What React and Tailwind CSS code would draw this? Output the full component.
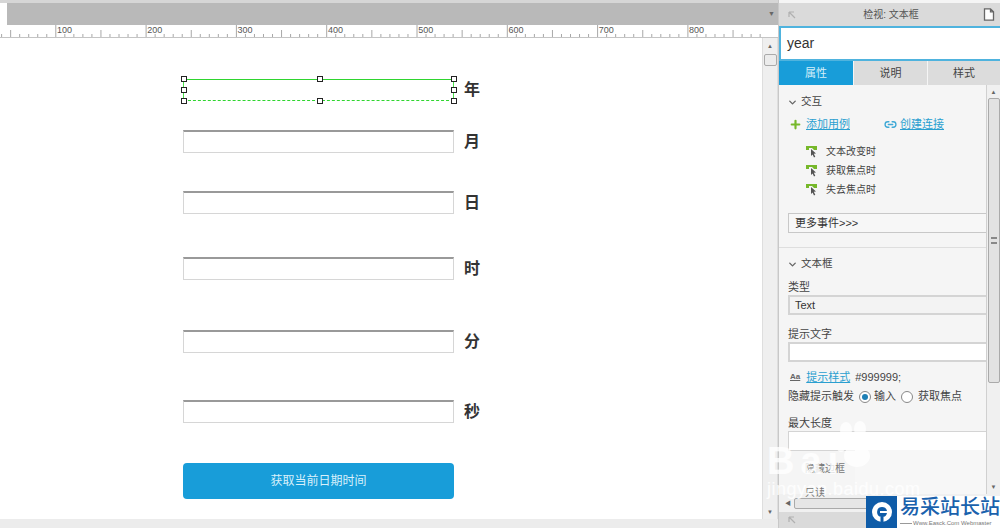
import React from 'react';
import { ChevronDown, Plus, Link2 } from 'lucide-react';

const fields = [
  { label: '月', mt: 'mt-[29px]' },
  { label: '日', mt: 'mt-[38px]' },
  { label: '时', mt: 'mt-[43px]' },
  { label: '分', mt: 'mt-[50px]' },
  { label: '秒', mt: 'mt-[47px]' },
];

const events = ['文本改变时', '获取焦点时', '失去焦点时'];

const Ruler = () => {
  const ticks = [];
  for (let i = 0; i < 100; i++) {
    const x = -34.5 + i * 9.03;
    const h = i % 10 === 0 ? 13 : i % 5 === 0 ? 7 : 3;
    ticks.push(<line key={i} x1={x} x2={x} y1={12 - h} y2={12} stroke="#a8a8a8" strokeWidth="1" />);
  }
  return (
    <div className="relative h-[13px] bg-white border-b border-[#c4c4c4] overflow-hidden">
      <svg width="762" height="12" className="block">{ticks}</svg>
      {[100, 200, 300, 400, 500, 600, 700, 800].map((n, i) => (
        <span key={n} className="absolute top-[-1px] text-[9px] leading-[13px] text-[#555]" style={{ left: 57 + i * 90.3 }}>{n}</span>
      ))}
    </div>
  );
};

const Handle = ({ className }) => (
  <span className={`absolute w-[6px] h-[6px] bg-white border border-[#222] ${className}`}></span>
);

const Inspector = () => (
  <div className="w-[222px] shrink-0 flex flex-col bg-[#f5f5f5] border-l border-[#c8c8c8] text-[11px] text-[#444] h-full">
    <div className="h-[23px] mt-[3px] bg-[#dadada] flex items-center justify-between pl-[9px] pr-[4px] shrink-0">
      <svg width="8" height="8" viewBox="0 0 8 8"><path d="M1 1h5M1 1v5M1 1l6 6" stroke="#b0b0b0" strokeWidth="1.2" fill="none" /></svg>
      <span className="text-[10px] text-[#555] ml-[3px]">检视: 文本框</span>
      <svg width="12" height="13" viewBox="0 0 12 13" className="mr-[1px]"><path d="M1.5.8h6l3 3v8.4h-9z M7.500 .8v3h3" fill="#fdfdfd" stroke="#666" strokeWidth="1.300" /></svg>
    </div>
    <div className="h-[35px] bg-white border-2 border-r-0 border-[#4fb3de] flex items-center pl-[6px] text-[14px] text-[#333] shrink-0">year</div>
    <div className="h-[24px] flex shrink-0">
      <div className="w-[74px] bg-[#189dd9] text-[#d4effa] flex items-center justify-center">属性</div>
      <div className="w-[73px] ml-[1px] bg-[#dcdcdc] flex items-center justify-center text-[#444]">说明</div>
      <div className="flex-1 ml-[1px] bg-[#dcdcdc] flex items-center justify-center text-[#444]">样式</div>
    </div>
    <div className="flex-1 flex min-h-0">
      <div className="flex-1 min-w-0 overflow-hidden">
        <div className="flex items-center pl-[8px] mt-[9px] h-[16px]">
          <ChevronDown size={11} strokeWidth={3} className="text-[#666]" />
          <span className="ml-[3px] text-[10.5px]">交互</span>
        </div>
        <div className="flex items-center mt-[6px] pl-[10px] h-[17px]">
          <Plus size={13} strokeWidth={4} className="text-[#76b82a]" />
          <span className="ml-[4px] text-[#2a9fd0] underline">添加用例</span>
          <Link2 size={13} strokeWidth={2.500} className="ml-[34px] text-[#3fa9d6]" />
          <span className="ml-[3px] text-[#2a9fd0] underline">创建连接</span>
        </div>
        <div className="mt-[11px] pl-[27px] flex flex-col gap-[4px] text-[10px]">
          {events.map((e) => (
            <div key={e} className="flex items-center h-[15px]">
              <svg width="12" height="12" viewBox="0 0 12 12">
                <path d="M0 0h11v4H8L6 2H3v2H0z" fill="#76b82a" />
                <path d="M5 3l5 4.500-2.200.3 1.500 3-1.300.6-1.400-3-1.600 1.500z" fill="#555" />
              </svg>
              <span className="ml-[8px]">{e}</span>
            </div>
          ))}
        </div>
        <div className="mt-[16px] ml-[9px] h-[20px] border border-r-0 border-[#c8c8c8] pl-[6px] flex items-center text-[#333] bg-[#f7f7f7]">更多事件&gt;&gt;&gt;</div>
        <div className="mt-[14px] border-t border-[#dedede]"></div>
        <div className="flex items-center pl-[8px] mt-[8px] h-[16px]">
          <ChevronDown size={11} strokeWidth={3} className="text-[#666]" />
          <span className="ml-[3px] text-[10.5px]">文本框</span>
        </div>
        <div className="ml-[9px] mt-[8px] leading-[15px]">类型</div>
        <div className="ml-[9px] h-[20px] border-2 border-r-0 border-[#d4d4d4] pl-[5px] flex items-center text-[#333] bg-[#f3f3f3]">Text</div>
        <div className="ml-[9px] mt-[12px] leading-[15px]">提示文字</div>
        <div className="ml-[9px] h-[20px] border-2 border-r-0 border-[#d4d4d4] bg-white"></div>
        <div className="flex items-center ml-[11px] mt-[6px] h-[18px]">
          <span className="text-[8px] font-bold underline text-[#666] font-['Liberation_Sans',sans-serif]">Aa</span>
          <span className="ml-[6px] text-[#2a9fd0] underline">提示样式</span>
          <span className="ml-[5px] text-[#444]">#999999;</span>
        </div>
        <div className="flex items-center ml-[9px] mt-[2px] h-[17px]">
          <span>隐藏提示触发</span>
          <span className="ml-[5px] w-[12px] h-[12px] rounded-full border border-[#888] flex items-center justify-center bg-white">
            <span className="w-[6px] h-[6px] rounded-full bg-[#1d7fb5]"></span>
          </span>
          <span className="ml-[3px]">输入</span>
          <span className="ml-[5px] w-[12px] h-[12px] rounded-full border border-[#888] bg-white"></span>
          <span className="ml-[5px]">获取焦点</span>
        </div>
        <div className="ml-[9px] mt-[11px] leading-[15px]">最大长度</div>
        <div className="ml-[9px] h-[20px] border border-r-0 border-[#d4d4d4] bg-white"></div>
      </div>
      <div className="w-[14px] shrink-0 border-l border-[#d0d0d0] bg-[#f0f0f0] flex flex-col items-center pt-[3px]">
        <span className="text-[6px] leading-[8px] text-[#666]">▲</span>
        <div className="mt-[2px] w-[12px] h-[285px] bg-[#e2e2e2] border border-[#aaa] rounded-[2px] flex items-center justify-center">
          <span className="w-[6px] h-[7px] border-y-2 border-[#888]"></span>
        </div>
        <span className="mt-auto mb-[3px] text-[6px] leading-[8px] text-[#666]">▼</span>
      </div>
    </div>
    <div className="h-[18px] bg-[#f0f0f0] shrink-0 flex items-center pl-[6px]">
      <span className="text-[6px] leading-[8px] text-[#666]">◀</span>
      <div className="ml-[3px] w-[120px] h-[11px] bg-[#e6e6e6] border border-[#aaa] rounded-[2px]"></div>
    </div>
    <div className="h-[16px] bg-[#dadada] shrink-0 flex items-center pl-[9px]">
      <svg width="8" height="8" viewBox="0 0 8 8"><path d="M1 1h5M1 1v5M1 1l6 6" stroke="#b0b0b0" strokeWidth="1.2" fill="none" /></svg>
    </div>
  </div>
);

const App = () => (
  <div className="relative w-[1000px] h-[528px] overflow-hidden bg-white flex font-['Liberation_Sans','Noto_Sans_CJK_SC',sans-serif]">
    <div className="flex-1 min-w-0 flex flex-col h-full">
      <div className="h-[3px] bg-[#d6d6d6] shrink-0"></div>
      <div className="h-[22px] flex shrink-0">
        <div className="w-[7px] bg-white"></div>
        <div className="flex-1 bg-[#b9b9b9] flex items-center justify-end pr-[3px]">
          <span className="text-[7px] text-[#666]">▼</span>
        </div>
      </div>
      <Ruler />
      <div className="flex-1 flex min-h-0">
        <div className="flex-1 min-w-0 pl-[183px] pt-[41px] overflow-hidden">
          <div className="flex items-center">
            <div className="relative w-[271px] h-[22px] border-x border-[#49e04a]">
              <div className="absolute left-[-1px] right-[-1px] top-0 h-[1px] bg-[#2fd52f]"></div>
              <div className="absolute left-[-1px] right-[-1px] bottom-0 border-b border-dashed border-[#2fd52f]"></div>
              <Handle className="left-[-3px] top-[-3px]" />
              <Handle className="left-[133px] top-[-3px]" />
              <Handle className="right-[-4px] top-[-3px]" />
              <Handle className="left-[-3px] top-[8px]" />
              <Handle className="right-[-4px] top-[8px]" />
              <Handle className="left-[-3px] bottom-[-3px]" />
              <Handle className="left-[133px] bottom-[-3px]" />
              <Handle className="right-[-4px] bottom-[-3px]" />
            </div>
            <span className="ml-[10px] text-[16px] leading-[22px] font-bold text-[#333]">年</span>
          </div>
          {fields.map((f) => (
            <div key={f.label} className={`flex items-center ${f.mt}`}>
              <div className="w-[271px] h-[23px] border border-[#d6d6d6] border-t-2 border-t-[#999] bg-white"></div>
              <span className="ml-[10px] text-[16px] leading-[23px] font-bold text-[#333]">{f.label}</span>
            </div>
          ))}
          <div className="mt-[40px] w-[271px] h-[36px] bg-[#189dd9] rounded-[4px] flex items-center justify-center text-[12px] text-[#d8f0fb]">获取当前日期时间</div>
        </div>
        <div className="w-[16px] shrink-0 bg-[#efefef] border-x border-[#dedede] flex flex-col items-center pt-[4px]">
          <span className="text-[6px] leading-[8px] text-[#666]">▲</span>
          <div className="mt-[4px] w-[13px] h-[12px] bg-[#ececec] border border-[#aaa] rounded-[2px]"></div>
          <span className="mt-auto mb-[3px] text-[6px] leading-[8px] text-[#666]">▼</span>
        </div>
      </div>
      <div className="h-[9px] bg-[#ececec] shrink-0"></div>
    </div>
    <Inspector />

    {/* baidu watermark */}
    <div className="absolute left-[855px] top-[450px] w-[131px] h-[44px] bg-[#f7f7f7]"></div>
    <div className="absolute left-[805px] top-[462px] text-[10px] leading-[14px] text-[#777]">隐藏边框</div>
    <div className="absolute left-[805px] top-[487px] text-[10px] leading-[12px] text-[#777]">只读</div>
    <div className="absolute left-[767px] top-[442px] text-[38px] leading-[38px] font-bold text-white/80 tracking-[6px]">Bai</div>
    <svg className="absolute left-[836px] top-[420px]" width="46" height="50" viewBox="0 0 46 50">
      <g fill="#fff" fillOpacity="0.75">
        <ellipse cx="10" cy="10" rx="6" ry="8" />
        <ellipse cx="24" cy="9" rx="6" ry="8" />
        <ellipse cx="37" cy="20" rx="6" ry="8" />
        <ellipse cx="5" cy="25" rx="5" ry="7" />
        <ellipse cx="21" cy="36" rx="13" ry="11" />
      </g>
    </svg>
    <div className="absolute left-[767px] top-[483px] text-[18px] leading-[13px] text-white/80 tracking-[0.5px]">jingyan.baidu.com</div>

    {/* site logo */}
    <div className="absolute right-0 bottom-0 w-[134px] h-[32px] bg-white flex">
      <div className="w-[31px] bg-[#0f5ca8] flex items-center justify-center">
        <svg width="20" height="20" viewBox="0 0 20 20">
          <circle cx="10" cy="10" r="10" fill="#fff" />
          <path d="M10 5a5 5 0 1 0 5 6H8V9h7a5 5 0 0 0-5-4z" fill="#0f5ca8" />
          <rect x="8.500" y="15" width="3" height="5" fill="#0f5ca8" />
        </svg>
      </div>
      <div className="flex-1 pl-[3px] overflow-hidden">
        <div className="text-[20px] leading-[23px] font-medium text-[#1a62ad] whitespace-nowrap">易采站长站</div>
        <div className="flex items-center">
          <span className="w-[12px] border-t border-[#999] shrink-0"></span>
          <span className="ml-[1px] text-[6px] leading-[8px] text-[#777] whitespace-nowrap">Www.Easck.Com Webmaster</span>
        </div>
      </div>
    </div>
  </div>
);

export default App;
